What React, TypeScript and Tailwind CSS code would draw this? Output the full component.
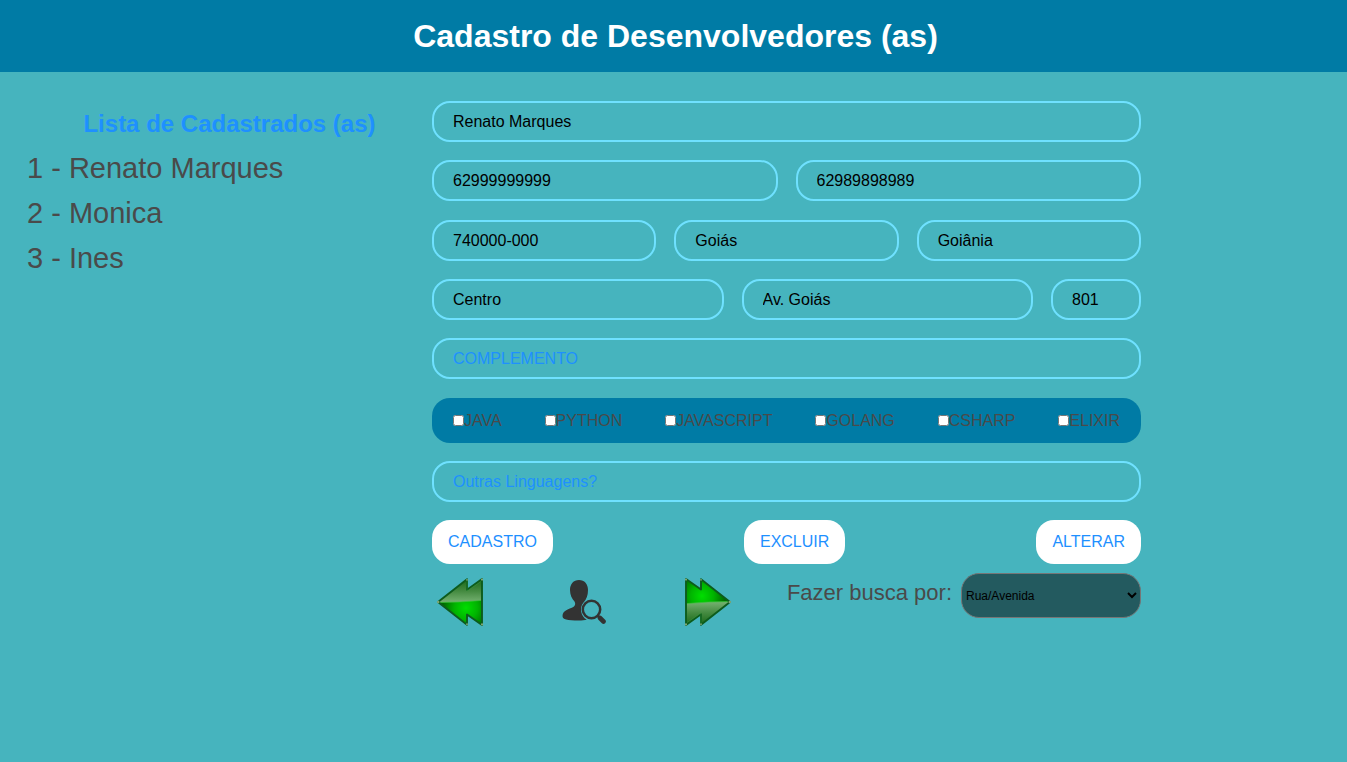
import { useState } from "react";
import type { InputHTMLAttributes } from "react";

const developers = ["Renato Marques", "Monica", "Ines"];
const languages = ["JAVA", "PYTHON", "JAVASCRIPT", "GOLANG", "CSHARP", "ELIXIR"];
const actions = ["CADASTRO", "EXCLUIR", "ALTERAR"];

function Field({ label, ...rest }: { label: string } & InputHTMLAttributes<HTMLInputElement>) {
  return (
    <input
      type="text"
      aria-label={label}
      className="h-[41px] w-full min-w-0 rounded-[18px] border-2 border-[#6fe1ff] bg-transparent px-[19px] text-base text-black outline-none placeholder:text-[#1e90ff] placeholder:opacity-100"
      {...rest}
    />
  );
}

function ArrowIcon({ id, className }: { id: string; className?: string }) {
  const shape = "M3 25 L32 2.2 V12.800 L47 2 V48 L32 37.500 V47.800 Z";
  return (
    <svg viewBox="0 0 50 50" className={className} aria-hidden="true">
      <defs>
        <radialGradient id={`${id}-glow`} gradientUnits="userSpaceOnUse" cx="31" cy="31" r="23">
          <stop offset="0" stopColor="#00de00" />
          <stop offset="0.5" stopColor="#00b400" />
          <stop offset="1" stopColor="#006c00" />
        </radialGradient>
        <linearGradient id={`${id}-shine`} gradientUnits="userSpaceOnUse" x1="0" y1="3" x2="0" y2="25">
          <stop offset="0" stopColor="#1d6a1c" />
          <stop offset="0.5" stopColor="#448a40" />
          <stop offset="1" stopColor="#74b070" />
        </linearGradient>
        <clipPath id={`${id}-clip`}>
          <path d={shape} />
        </clipPath>
      </defs>
      <path d={shape} fill={`url(#${id}-glow)`} />
      <g clipPath={`url(#${id}-clip)`}>
        <path d="M0 25.500 Q24 25.500 47 23.500 V0 H0 Z" fill={`url(#${id}-shine)`} />
        <path d="M3 25.500 Q24 25.500 46 23.500" fill="none" stroke="#35c435" strokeWidth="0.7" />
      </g>
      <path d={shape} fill="none" stroke="#0d5c1d" strokeWidth="1.900" strokeLinejoin="round" />
      <path d="M32 3.500 V14 L46 4.500" fill="none" stroke="#3f9e42" strokeOpacity="0.7" strokeWidth="0.6" />
      <g fill="#9dba8c" fillOpacity="0.8">
        <circle cx="3.200" cy="25" r="1.200" />
        <circle cx="47" cy="2.600" r="1.100" />
        <circle cx="47" cy="47.400" r="1.100" />
        <circle cx="32" cy="2.800" r="0.900" />
        <circle cx="32" cy="47.200" r="0.900" />
      </g>
    </svg>
  );
}

function PersonSearchIcon({ className }: { className?: string }) {
  return (
    <svg viewBox="0 0 44 44" className={className} aria-hidden="true">
      <path
        d="M17 0C11.500 0 8 4 8 10C8 15 10 19 12.500 21.500C13.500 23 13.500 25 12 26.500C8 29 0.500 30 0.500 36C0.500 39.500 5 40.500 17 40.500C20 40.500 22.500 40.300 24.800 39.800C18.500 36 17.200 27.500 21.500 22.500C24.500 19.500 26 15 26 10C26 4 22.500 0 17 0Z"
        fill="#333333"
      />
      <circle cx="29.500" cy="29.500" r="8.700" fill="none" stroke="#333333" strokeWidth="2.500" />
      <path d="M36 36 L38 38" stroke="#333333" strokeWidth="2.500" />
      <path d="M38 38 L41.500 41.500" stroke="#333333" strokeWidth="4.600" strokeLinecap="round" />
    </svg>
  );
}

export default function App() {
  const [selected, setSelected] = useState<string[]>([]);
  const toggle = (name: string) =>
    setSelected((list) => (list.includes(name) ? list.filter((n) => n !== name) : [...list, name]));

  return (
    <div className="min-h-screen bg-[#46b4be] font-['Liberation_Sans',Arial,sans-serif] text-[#4a4a4a]">
      <header className="bg-[#007ba5] py-3 text-center">
        <h1 className="pl-1 text-[32px] leading-[48px] font-bold text-white">Cadastro de Desenvolvedores (as)</h1>
      </header>

      <main className="grid grid-cols-[432fr_709fr_206fr] pt-[29px]">
        <aside className="pl-[27px]">
          <h2 className="text-center text-2xl leading-[45px] font-bold text-[#1e90ff]">Lista de Cadastrados (as)</h2>
          <ul className="text-[29px] leading-[45px]">
            {developers.map((name, i) => (
              <li key={name}>
                {i + 1} - {name}
              </li>
            ))}
          </ul>
        </aside>

        <form className="flex flex-col gap-[19px]" onSubmit={(e) => e.preventDefault()}>
          <section className="flex flex-col gap-[18px]">
            <Field label="Nome" defaultValue="Renato Marques" />
            <div className="grid grid-cols-2 gap-[18px]">
              <Field label="Telefone" defaultValue="62999999999" />
              <Field label="Celular" defaultValue="62989898989" />
            </div>
          </section>

          <section className="flex flex-col gap-[18px]">
            <div className="grid grid-cols-3 gap-[18px]">
              <Field label="CEP" defaultValue="740000-000" />
              <Field label="Estado" defaultValue="Goiás" />
              <Field label="Cidade" defaultValue="Goiânia" />
            </div>
            <div className="grid grid-cols-[1fr_1fr_90px] gap-[18px]">
              <Field label="Bairro" defaultValue="Centro" />
              <Field label="Rua" defaultValue="Av. Goiás" />
              <Field label="Número" defaultValue="801" />
            </div>
            <Field label="Complemento" placeholder="COMPLEMENTO" />
          </section>

          <section className="flex flex-col gap-[18px]">
            <div className="flex h-[45px] items-center justify-between rounded-[18px] bg-[#007ba5] px-[21px] text-base">
              {languages.map((name) => (
                <label key={name} className="flex items-center">
                  <input
                    type="checkbox"
                    className="size-[11px]"
                    checked={selected.includes(name)}
                    onChange={() => toggle(name)}
                  />
                  {name}
                </label>
              ))}
            </div>
            <Field label="Outras linguagens" placeholder="Outras Linguagens?" />
            <div className="flex flex-col gap-[9px]">
              <div className="flex justify-between">
                {actions.map((name) => (
                  <button
                    key={name}
                    type="button"
                    className="h-11 cursor-pointer rounded-[18px] bg-white px-4 text-base text-[#1e90ff]"
                  >
                    {name}
                  </button>
                ))}
              </div>
              <div className="flex items-start justify-between">
                <div className="flex gap-[68px]">
                  <button type="button" aria-label="Anterior" className="flex h-[58px] w-14 cursor-pointer items-center justify-center">
                    <ArrowIcon id="previous" className="size-[50px]" />
                  </button>
                  <button type="button" aria-label="Buscar" className="flex h-[58px] w-14 cursor-pointer items-center justify-center">
                    <PersonSearchIcon className="size-11" />
                  </button>
                  <button type="button" aria-label="Próximo" className="flex h-[58px] w-14 cursor-pointer items-center justify-center">
                    <ArrowIcon id="next" className="size-[50px] rotate-180" />
                  </button>
                </div>
                <div className="flex items-start gap-[9px]">
                  <label htmlFor="search-by" className="text-[22px] leading-10">
                    Fazer busca por:
                  </label>
                  <select
                    id="search-by"
                    defaultValue="Rua/Avenida"
                    className="h-[45px] w-[180px] rounded-[18px] border border-[#767676] bg-[#235a5f] text-xs text-black"
                  >
                    <option>Rua/Avenida</option>
                    <option>Nome</option>
                    <option>Cidade</option>
                    <option>Bairro</option>
                  </select>
                </div>
              </div>
            </div>
          </section>
        </form>
      </main>
    </div>
  );
}
